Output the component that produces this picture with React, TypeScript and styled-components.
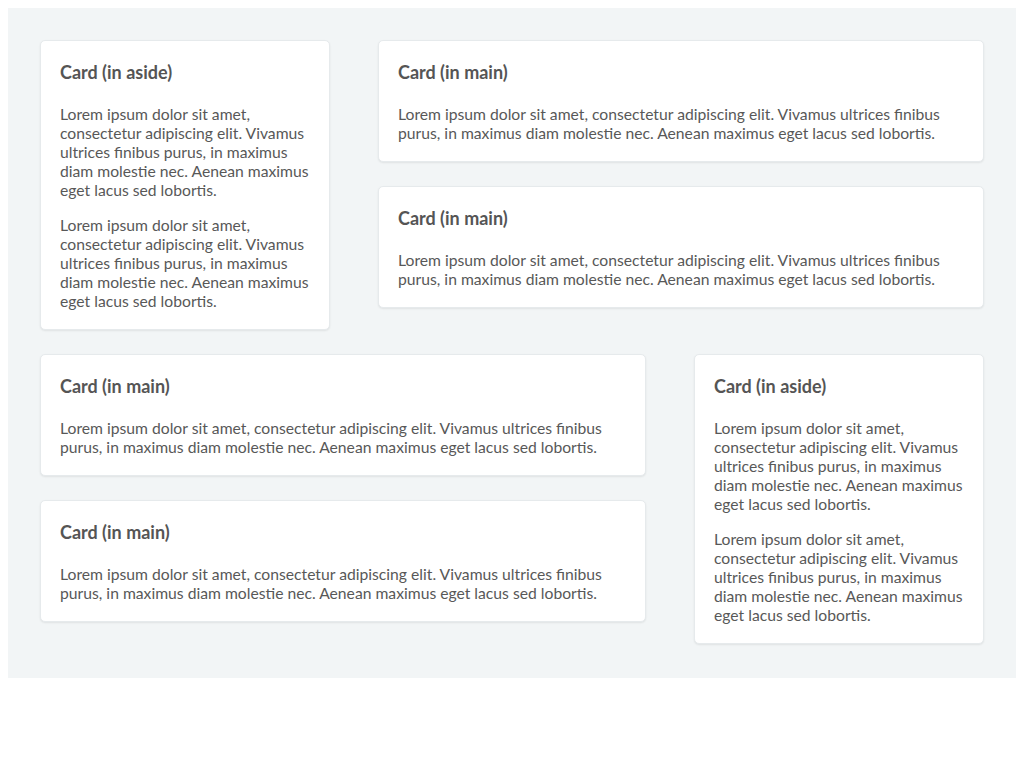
import React from "react";
import styled, { createGlobalStyle } from "styled-components";

const Global = createGlobalStyle`
  body { margin: 8px; font-family: Lato, "Noto Sans", sans-serif; color: #555; background: #fff; }
`;

const Page = styled.div`
  background: #f2f5f6;
  padding: 32px 32px 34px;
  display: flex;
  flex-direction: column;
  gap: 24px;
`;

const Row = styled.div<{ $reverse?: boolean }>`
  display: grid;
  grid-template-columns: ${(p) => (p.$reverse ? "606px 290px" : "290px 606px")};
  column-gap: 48px;
  align-items: start;
`;

const Column = styled.div`
  display: flex;
  flex-direction: column;
  gap: 24px;
`;

const Card = styled.section`
  background: #fff;
  border: 1px solid #e6eaec;
  border-radius: 5px;
  box-shadow: 0 1px 2px rgba(0, 0, 0, 0.08);
  padding: 20px 19px 18px;
`;

const Title = styled.h2`
  margin: 0 0 22px;
  font-size: 18px;
  font-weight: 700;
  line-height: 22px;
  color: #555;
`;

const Text = styled.p`
  margin: 0;
  font-size: 15.7px;
  line-height: 19px;
  color: #585858;
  & + & { margin-top: 16px; }
`;

const lorem =
  "Lorem ipsum dolor sit amet, consectetur adipiscing elit. Vivamus ultrices finibus purus, in maximus diam molestie nec. Aenean maximus eget lacus sed lobortis.";

const AsideCard = () => (
  <Card>
    <Title>Card (in aside)</Title>
    <Text>{lorem}</Text>
    <Text>{lorem}</Text>
  </Card>
);

const MainCard = () => (
  <Card>
    <Title>Card (in main)</Title>
    <Text>{lorem}</Text>
  </Card>
);

export default function App() {
  return (
    <>
      <Global />
      <Page>
        <Row>
          <AsideCard />
          <Column>
            <MainCard />
            <MainCard />
          </Column>
        </Row>
        <Row $reverse>
          <Column>
            <MainCard />
            <MainCard />
          </Column>
          <AsideCard />
        </Row>
      </Page>
    </>
  );
}
